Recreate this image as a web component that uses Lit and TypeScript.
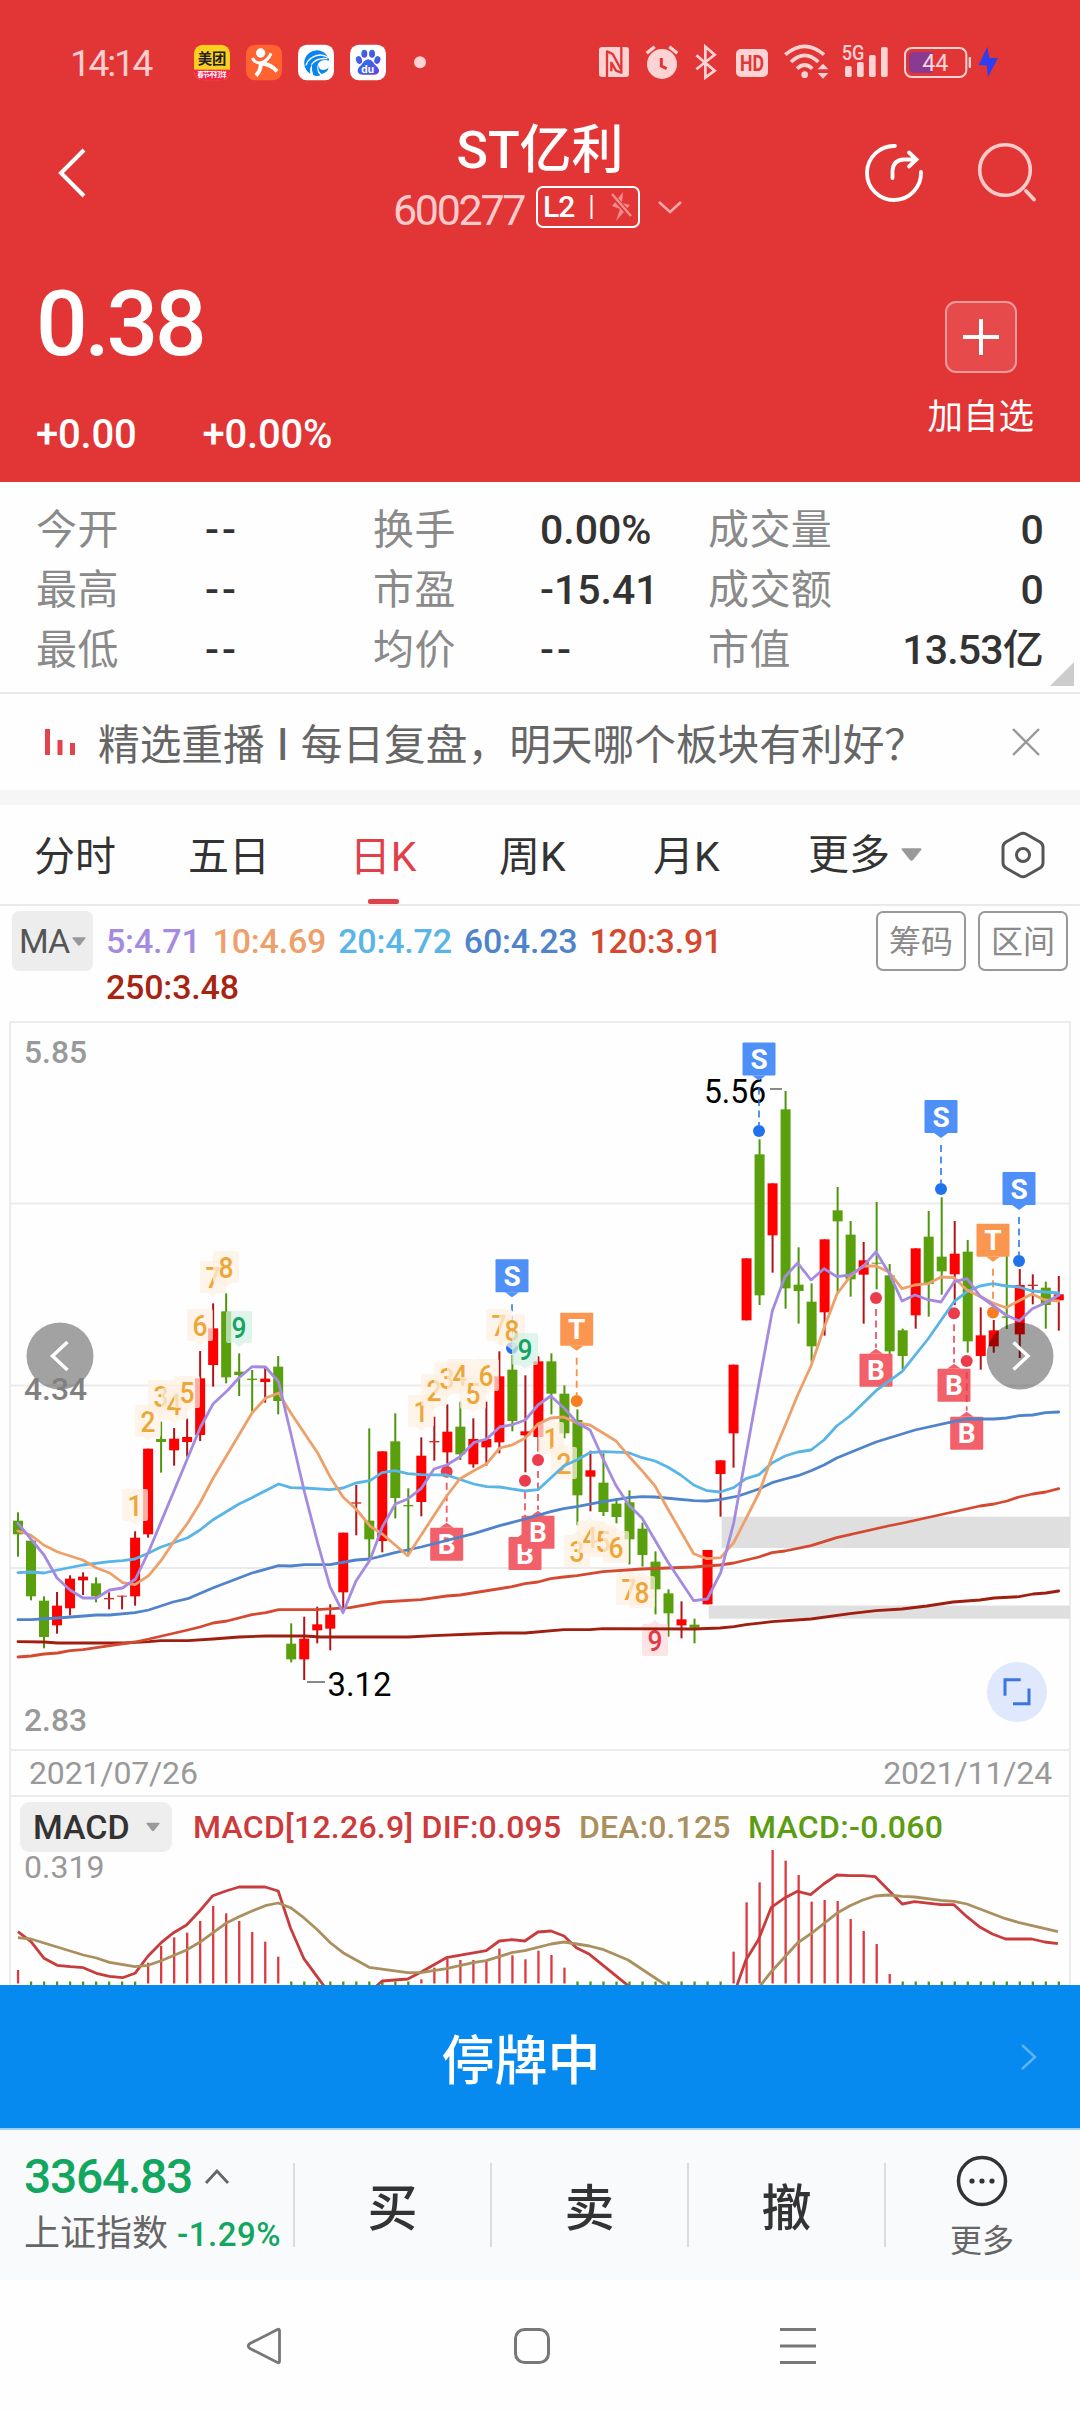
import { LitElement, html, svg, css } from "lit";
import { customElement } from "lit/decorators.js";

const FONT = css`Roboto, "Noto Sans CJK SC", sans-serif`;

/* ---------- candle data: [base y, rows of body top, body bottom, wick top, wick bottom] in thirds of a pixel ---------- */
type Row = [string, number, number, number, number];
const FIRST_X = 18;
const STEP = 13.01;
const xAt = (i: number) => FIRST_X + STEP * i;

const GROUPS: [number, Row[]][] = [
  [1390, [
    ["g", 392, 433, 367, 500], ["g", 452, 619, 452, 631], ["g", 632, 741, 619, 775], ["r", 647, 706, 606, 731],
    ["r", 566, 655, 556, 676], ["r", 560, 571, 547, 615], ["g", 580, 619, 562, 637], ["r", 624, 628, 607, 658],
    ["r", 617, 620, 617, 658], ["r", 443, 619, 424, 647], ["r", 176, 433, 176, 443], ["g", 147, 156, 95, 248],
    ["r", 146, 181, 114, 227], ["r", 141, 156, 86, 200], ["r", -35, 135, -117, 153],
  ]],
  [1000, [
    ["r", 985, 1095, 910, 1160], ["g", 934, 1132, 880, 1150], ["g", 1115, 1125, 1060, 1188],
    ["g", 1136, 1140, 1110, 1235], ["r", 1136, 1146, 1100, 1208], ["g", 1100, 1203, 1068, 1243],
  ]],
  [1390, [
    ["g", 761, 808, 700, 817], ["r", 746, 808, 680, 870], ["r", 703, 721, 650, 760], ["r", 674, 716, 643, 781],
    ["r", 428, 607, 428, 660],
  ]],
  [1240, [
    ["r", 787, 791, 735, 886], ["g", 842, 898, 565, 955], ["r", 634, 903, 634, 937], ["g", 604, 774, 520, 835],
    ["g", 795, 799, 745, 940], ["r", 647, 786, 592, 829], ["r", 603, 607, 530, 662], ["r", 575, 637, 493, 690],
    ["g", 560, 643, 485, 660], ["r", 597, 673, 535, 683], ["r", 597, 622, 485, 677], ["r", 409, 607, 334, 640],
    ["g", 389, 543, 345, 574], ["r", 574, 586, 406, 697], ["r", 364, 591, 349, 635], ["g", 364, 461, 340, 523],
    ["g", 461, 580, 436, 595], ["g", 540, 766, 508, 856], ["r", 691, 710, 632, 814], ["g", 728, 816, 640, 828],
    ["g", 791, 831, 775, 850], ["g", 787, 898, 751, 973], ["g", 866, 945, 848, 980], ["g", 965, 1048, 934, 1123],
    ["g", 1060, 1120, 1048, 1190], ["r", 1138, 1156, 1084, 1195], ["g", 1154, 1163, 1136, 1210],
    ["r", 930, 1093, 930, 1093],
  ]],
  [1400, [["r", 181, 222, 181, 350]]],
  [1010, [
    ["r", 1064, 1270, 1064, 1373], ["r", 745, 931, 745, 931], ["g", 433, 856, 388, 885], ["r", 520, 676, 520, 788],
    ["g", 298, 835, 243, 896], ["g", 824, 843, 712, 941], ["g", 875, 1009, 820, 1055], ["r", 688, 907, 688, 977],
    ["g", 601, 634, 531, 850], ["g", 674, 808, 633, 860], ["r", 751, 794, 696, 941], ["g", 758, 761, 576, 838],
    ["g", 796, 1024, 762, 1055], ["g", 961, 1038, 956, 1078], ["r", 715, 916, 715, 956], ["g", 680, 822, 603, 920],
    ["g", 740, 784, 562, 854], ["r", 731, 793, 633, 885], ["g", 725, 994, 690, 1028], ["r", 976, 1038, 892, 1079],
    ["r", 961, 1009, 930, 1028], ["g", 919, 923, 735, 957], ["r", 825, 973, 777, 1044], ["r", 824, 828, 793, 883],
    ["g", 833, 885, 815, 956], ["r", 853, 871, 798, 962],
  ]],
];
const CANDLES = GROUPS.flatMap(([base, rows]) =>
  rows.map(([c, ...v]) => ({ up: c === "r", v: v.map((n) => base + n / 3) })));

const LINES: { color: string; pts: string }[] = [
  { color: "#a01e10", pts: "18,1641.7 44,1642 57.7,1643 123,1643 149,1641.7 161,1640.7 188,1640.7 213,1639 239,1637 266,1636 305,1636 320,1637 408,1637 434,1635.7 474,1634 500,1633 525,1633 564,1629.7 590,1629.7 603,1628.7 694,1629 720,1628 734,1626.7 746,1624.7 772,1621.7 811,1619 850,1613.7 876,1610.7 902,1609 927,1606 953,1602 980,1600 994,1598 1019,1596.7 1033,1594 1046,1593 1058.7,1591" },
  { color: "#d4492f", pts: "18,1657 31,1656 44,1654 57.7,1653 70,1650.7 83,1649.7 110,1645.7 135,1642 149,1639 187.7,1630 200,1627 213,1623 227,1621 252,1614.7 266,1612.7 278.7,1609.7 317,1609.7 350,1607.7 382,1602 421,1599.7 446.7,1596 460,1595 512,1586.7 525,1583.7 538,1582 550.7,1578.7 563.7,1577 577,1575.7 603,1571.7 642,1569 693.7,1567 720,1565 733.7,1563 759,1557 772,1552.7 785,1551 811,1545.7 836.7,1537.7 888,1526 903,1523 980,1506 994,1504 1007,1501 1019,1497 1032.7,1494 1045.7,1492 1058.7,1488.7" },
  { color: "#4f83cc", pts: "18,1619.7 31,1619.7 57.7,1618 96.7,1615 109.7,1615 135,1612.7 148.7,1610 173,1602 187.7,1598.7 212.7,1588 252,1573 278.7,1565.7 290.7,1566 304.7,1564.7 330,1564.7 356,1560 370,1559 395,1552.7 421,1547 473.7,1533.7 499.7,1525.7 525,1519 550.7,1511.7 563.7,1508.7 576.7,1506.7 603,1501.7 628.7,1497.7 642,1496.7 655,1497 693.7,1500.7 707,1501 720,1499.7 738.3,1496 759,1489 772,1482.7 785,1479 798,1475.7 811,1470.7 824,1465 836.7,1458 876,1442 915,1430 953,1421.7 966.7,1419 994,1419 1006.7,1418 1019,1415.7 1032.7,1415 1045.7,1412.7 1058.7,1412" },
  { color: "#58b5e6", pts: "18,1572.7 31,1572 44,1573 57.7,1570 82.7,1565 109.7,1561.7 122.7,1560.7 135,1559 148.7,1553 161,1547 173,1543 187.7,1537.7 200,1530 212.7,1520 239,1504 252,1497.7 278.7,1484 290.7,1487.7 304.7,1488 330,1489.7 343,1488 356,1483 370,1480.7 382,1472.7 395,1470.7 407.7,1473.7 421,1474.7 446.7,1475 473.7,1484 486.7,1486.7 499.7,1487 525,1491 538,1489.7 563.7,1466 576.7,1460 590,1452.7 603,1451.7 628.7,1452.7 642,1457.7 655,1461 667.7,1467 680.7,1475 693.7,1485 707,1490.7 720,1492 733.7,1487.7 746,1478.7 759,1474.7 772,1463 785,1456 798,1452 811,1450 824,1440 836.7,1426 850,1416 876,1390.7 902,1371.7 928,1339 954,1301.7 967,1291.7 980,1286 993,1283.7 1006,1286 1019,1287 1032,1291 1045,1292 1059,1293" },
  { color: "#eda06a", pts: "18,1531 30.7,1535 43.7,1545 57.7,1552 82.7,1560 96.7,1568 109.7,1573 122.7,1582.7 135,1584.7 148.7,1575.7 161,1560.7 173,1542.7 187.7,1523 200,1503 212.7,1479 252,1413 265.7,1398 278.7,1393 290.7,1412.7 317.7,1453 330,1476.7 343,1497 356,1509 370,1526 382.3,1534 407.7,1555.7 446.7,1496 459.7,1479 473.7,1470.7 486.7,1463.7 499.7,1448 512,1445 525.3,1438 538,1424 550.7,1418 563.7,1417 577,1423 590,1425 615.7,1440.7 628.7,1456 642,1470.7 655,1486 667.7,1508.7 693.7,1553.7 707,1558.7 720.7,1557.7 733.7,1542.7 759,1493 772,1456.7 785,1426 797.7,1395 811,1366 824,1328 837,1294 850,1276.7 863,1266 876,1266 889,1272 902,1288.7 915,1285 928,1283.7 941,1277 954,1277.7 967,1290 993,1303 1006,1307.7 1019,1300.7 1032,1294 1045,1300 1059,1301" },
  { color: "#a48be0", pts: "18,1523.3 44,1555 57,1578 70,1590 83,1598 96.5,1598 109.5,1590 122.5,1588 135.5,1579 148.5,1552 187.7,1458 200.5,1427 213,1404 228,1390 239,1377.7 252,1366.7 265.5,1367 278.5,1381.7 290.7,1433 304.7,1493 317.7,1543 330,1586.7 343,1612.7 356,1581 370,1560 382.3,1527 395.3,1504 407.7,1499 421,1488.7 434,1469 446.7,1465 459.7,1457 473.7,1442.7 486.7,1439 499.7,1427 512.3,1424.7 525.3,1420 538,1405 550.7,1396 563.7,1407.7 577.3,1423 590,1430 602.7,1458 615.7,1485 628.7,1505 642,1518 667.7,1561.7 693.7,1600.7 707.3,1599 720.7,1572.7 733.7,1523 759,1383 772.3,1311 785,1276.7 797.7,1263 811,1280 824,1268.7 837,1276.7 850,1275 863,1266.7 876,1251.7 889,1273 902,1301 915,1295 928,1299.7 941,1302 954.3,1281.7 967,1278.7 980,1296 1006,1315 1019.3,1321 1032.3,1308.7 1045.3,1303 1059,1295" },
];

/* label, centre x, top y, tone (o: orange, g: green, p: pink), pointer below */
const TAGS: [string, number, number, string, boolean][] = [
  ["1", 135, 1489, "o", true], ["2", 148, 1405, "o", true], ["3", 161, 1380, "o", true], ["4", 174, 1388, "o", true],
  ["5", 187, 1376, "o", true], ["6", 200, 1309, "o", true], ["7", 213, 1261, "o", true], ["8", 226, 1251, "o", true],
  ["9", 239, 1311, "g", true],
  ["1", 421, 1395, "o", true], ["2", 434, 1374, "o", true], ["3", 447, 1362, "o", true], ["4", 460, 1359, "o", true],
  ["5", 473, 1377, "o", true], ["6", 486, 1359, "o", true], ["7", 499, 1309, "o", true], ["8", 512, 1314, "o", true],
  ["9", 525, 1333, "g", true],
  ["1", 551, 1422, "o", false], ["2", 564, 1447, "o", false], ["3", 577, 1535, "o", false], ["4", 590, 1521, "o", false],
  ["5", 603, 1525, "o", false], ["6", 616, 1531, "o", false], ["7", 629, 1573, "o", false], ["8", 642, 1576, "o", false],
  ["9", 655, 1624, "p", false],
];
const TONES: Record<string, [string, string]> = {
  o: ["#fdf0e0", "#eda638"], g: ["#d3f0e2", "#14a463"], p: ["#ffdadd", "#e03a48"],
};

/* letter, centre x, badge top, dot y */
const FLAGS: [string, number, number, number][] = [
  ["S", 512, 1259.3, 1348], ["T", 576.7, 1312.7, 1401], ["B", 446.7, 1527.7, 1471.7], ["B", 525, 1537, 1480.7],
  ["B", 538, 1515.7, 1460], ["S", 759, 1042.5, 1131], ["S", 941, 1100, 1189], ["T", 993, 1223.7, 1312.5],
  ["S", 1019, 1172, 1261], ["B", 876, 1353.7, 1298], ["B", 954, 1368.7, 1313.3], ["B", 966.7, 1416.7, 1361],
];
const FLAG_COLORS: Record<string, [string, string]> = {
  S: ["#4e8ff8", "#2272ee"], T: ["#fb9650", "#fb7d21"], B: ["#f2606a", "#ec3b4b"],
};

@customElement("k-chart")
class KChart extends LitElement {
  static styles = css`
    :host { display: block; height: 730px; }
    svg { display: block; font-family: ${FONT}; }
    .axis { fill: #999; font-size: 32px; font-weight: 500; }
    .axis.dim { fill: #808080; }
    .note { fill: #000; font-size: 33px; }
    .flag { fill: #fff; font-size: 28px; font-weight: 700; text-anchor: middle; }
    .tag { font-size: 30px; font-weight: 500; text-anchor: middle; }
  `;

  private candle(c: { up: boolean; v: number[] }, i: number) {
    const [t, b, wt, wb] = c.v;
    const x = xAt(i);
    const thin = b - t < 2;
    return svg`
      <rect x=${x - 1} y=${wt} width="2" height=${wb - wt} fill=${c.up ? "#b01518" : "#4d960c"}></rect>
      <rect x=${x - 5} y=${t} width="10" height=${b - t} fill=${c.up ? (thin ? "#d02a2a" : "#fe0000") : "#59a00c"}></rect>`;
  }

  private tag([label, x, y, tone, below]: [string, number, number, string, boolean]) {
    const [bg, fg] = TONES[tone];
    const tip = below ? `M${x - 5} ${y + 32}h10l-5 4z` : `M${x - 5} ${y}h10l-5 -4z`;
    return svg`
      <rect x=${x - 13} y=${y} width="26" height="32" rx="2" fill=${bg} opacity=".72"></rect>
      <path d=${tip} fill=${bg} opacity=".72"></path>
      <text class="tag" x=${x} y=${y + 27} fill=${fg} textLength="15" lengthAdjust="spacingAndGlyphs">${label}</text>`;
  }

  private flag([letter, x, y, dot]: [string, number, number, number]) {
    const [bg, fg] = FLAG_COLORS[letter];
    const down = letter !== "B";
    const tip = down ? `M${x - 7} ${y + 33}h14l-7 5z` : `M${x - 7} ${y}h14l-7 -5z`;
    const from = down ? y + 45 : dot + 11;
    const to = down ? dot - 6 : y - 6;
    return svg`
      <line x1=${x} x2=${x} y1=${from} y2=${to} stroke=${fg} stroke-width="1.8" stroke-dasharray="7 4.5" opacity=".85"></line>
      <circle cx=${x} cy=${dot} r="6" fill=${fg}></circle>
      <rect x=${x - 16.5} y=${y} width="33" height="33" rx="1" fill=${bg}></rect>
      <path d=${tip} fill=${bg}></path>
      <text class="flag" x=${x} y=${y + 26.5}>${letter}</text>`;
  }

  render() {
    return html`<svg width="1080" height="730" viewBox="0 1021 1080 730">
      <g stroke="#ebebeb" stroke-width="2" fill="none">
        <path d="M10 1022H1070V1751M10 1022V1751M10 1203.5H1070M10 1385.5H1070M10 1568H1070M10 1750H1070"></path>
      </g>
      <rect x="721.7" y="1516.7" width="348.3" height="31.3" fill="#dfdfdf"></rect>
      <rect x="708.7" y="1605.5" width="361.3" height="13.2" fill="#dfdfdf"></rect>
      ${CANDLES.map((c, i) => this.candle(c, i))}
      <text class="note" x="704" y="1103" textLength="62" lengthAdjust="spacingAndGlyphs">5.56</text>
      <text class="note" x="327.500" y="1696" textLength="64" lengthAdjust="spacingAndGlyphs">3.12</text>
      <path d="M770 1089H782M307 1682H325" stroke="#888" stroke-width="2"></path>
      ${FLAGS.map((f) => this.flag(f))}
      ${TAGS.map((t) => this.tag(t))}
      ${LINES.map((l) => svg`<polyline points=${l.pts} fill="none" stroke=${l.color} stroke-width="2.8" stroke-linejoin="round" stroke-linecap="round"></polyline>`)}
      <circle cx="60" cy="1356" r="33.5" fill="#000" opacity=".36"></circle>
      <circle cx="1020" cy="1356" r="33.5" fill="#000" opacity=".36"></circle>
      <path d="M67.5 1342L52.5 1356L67.5 1370M1013.5 1342.5L1028 1356L1013.5 1369.5" fill="none" stroke="#fff" stroke-width="3.4"></path>
      <text class="axis" x="24" y="1063" textLength="63" lengthAdjust="spacingAndGlyphs">5.85</text>
      <text class="axis dim" x="24" y="1400" textLength="63" lengthAdjust="spacingAndGlyphs">4.34</text>
      <text class="axis" x="24" y="1731" textLength="63" lengthAdjust="spacingAndGlyphs">2.83</text>
      <circle cx="1017" cy="1692" r="30" fill="#dfe8fd"></circle>
      <path d="M1020.7 1679.7H1005V1695.7M1029 1688.5V1703.7H1013" fill="none" stroke="#3b76e0" stroke-width="3"></path>
    </svg>`;
  }
}

/* ---------- MACD ---------- */
const HIST: Record<number, number> = { 0: 690 };
[668, 618, 592, 578, 543, 498, 520, 543, 576, 605, 650].forEach((v, i) => (HIST[10 + i] = v));
[718, 683, 657, 660, 660, 662, 626, 646, 658, 632, 645, 683].forEach((v, i) => (HIST[31 + i] = v));
[635, 487, 427, 330, 362, 405, 485, 480, 483, 537, 573, 612, 702].forEach((v, i) => (HIST[55 + i] = v));

const DIF = [
  "26,575 45,605 64,655 83,676 102,680 121,683 140,700 159,709 178,713 196,700 215,648 234,608 252,578 271,555 290,513 309,467 328,453 347,441 385,441 404,453 422,565 441,655 470,737",
  "547,737 555,723 592,717 611,697 648,653 706,632 725,603 743,599 762,603 781,576 800,573 819,588 837,623 856,643 912,737",
  "1070,737 1083,660 1101,600 1120,502 1140,473 1158,454 1177,464 1196,432 1215,405 1234,407 1253,407 1271,410 1310,492 1328,485 1366,494 1385,494 1404,530 1422,560 1441,582 1460,597 1498,597 1517,606 1536,611",
];
const DEA = [
  "26,593 45,597 83,621 121,645 140,654 159,667 196,680 215,676 234,662 271,630 290,607 328,550 347,530 366,513 385,497 404,489 422,503 441,533 460,568 480,609 498,638 536,682 592,698 611,698 648,686 687,668 706,662 743,638 762,632 800,612 819,606 856,618 875,628 912,660 968,737",
  "1104,737 1120,695 1158,609 1180,577 1215,520 1234,497 1253,480 1271,468 1290,465 1310,469 1328,471 1366,481 1385,484 1404,492 1441,521 1460,536 1480,548 1536,575",
];
const scaled = (s: string) =>
  s.split(" ").map((p) => {
    const [x, y] = p.split(",").map(Number);
    return `${(x / 1.452).toFixed(1)},${(y / 3 - 57).toFixed(1)}`;
  }).join(" ");

@customElement("macd-chart")
class MacdChart extends LitElement {
  static styles = css`
    :host { display: block; }
    svg { display: block; }
  `;
  render() {
    return html`<svg width="1080" height="188" viewBox="0 0 1080 188">
      <path d="M10 0V188M1070 0V188" stroke="#ebebeb" stroke-width="2"></path>
      ${Array.from({ length: 81 }, (_, i) => {
        const top = HIST[i];
        return top
          ? svg`<rect x=${xAt(i) - 1.1} y=${top / 3 - 57} width="2.3" height=${186.5 - (top / 3 - 57)} fill="#dc3a40"></rect>`
          : svg`<rect x=${xAt(i) - 1.1} y="184.5" width="2.3" height="3.5" fill="#4a9a10"></rect>`;
      })}
      ${DIF.map((p) => svg`<polyline points=${scaled(p)} fill="none" stroke="#c83c3e" stroke-width="2.8" stroke-linejoin="round"></polyline>`)}
      ${DEA.map((p) => svg`<polyline points=${scaled(p)} fill="none" stroke="#ab905f" stroke-width="2.8" stroke-linejoin="round"></polyline>`)}
    </svg>`;
  }
}

/* ---------- page ---------- */
const STATS = [
  ["今开", "--", "换手", "0.00%", "成交量", "0"],
  ["最高", "--", "市盈", "-15.41", "成交额", "0"],
  ["最低", "--", "均价", "--", "市值", "13.53亿"],
];
const MAS: [string, string][] = [
  ["5:4.71", "#a48be0"], ["10:4.69", "#eda06a"], ["20:4.72", "#58b5e6"], ["60:4.23", "#4f83cc"],
  ["120:3.91", "#d4492f"], ["250:3.48", "#a82412"],
];

@customElement("app-root")
class AppRoot extends LitElement {
  static styles = css`
    :host {
      display: flex; flex-direction: column; width: 1080px; height: 2412px; overflow: hidden;
      background: #fefefe; font-family: ${FONT}; color: #333;
    }
    * { box-sizing: border-box; }
    svg { display: block; flex: none; }
    .head { height: 482px; background: #e23536; color: #fff; flex: none; }
    .status { display: flex; align-items: center; height: 66px; margin-top: 30px; padding-left: 70px; }
    .time { width: 110px; font-size: 37px; letter-spacing: -2.2px; color: #ffcdcd; }
    .status-right { margin-left: auto; margin-right: 70px; }
    .mini { font-weight: 700; }
    .title-row { display: flex; height: 144px; padding: 24px 0 0; }
    .back { width: 300px; padding: 28px 0 0 56px; }
    .center { width: 480px; display: flex; flex-direction: column; align-items: center; }
    .name { font-size: 52px; line-height: 58px; font-weight: 500; padding-top: 2px; }
    .code-row { display: flex; align-items: center; height: 42px; margin-top: 6px; width: 294px; }
    .code { font-size: 43px; line-height: 42px; letter-spacing: -2.3px; color: #ffcaca; width: 143px; padding-top: 5px; }
    .caret { margin-left: 16px; }
    .l2 {
      display: flex; align-items: center; width: 104px; height: 42px; border: 2px solid #fff; border-radius: 7px;
      font-size: 30px; font-weight: 500; padding-left: 5px; letter-spacing: -1px; line-height: 38px;
    }
    .price-row { display: flex; justify-content: space-between; padding: 38px 46px 0 36px; }
    .price { font-size: 91px; line-height: 92px; font-weight: 500; letter-spacing: -3.2px; }
    .changes { display: flex; gap: 66px; font-size: 40px; line-height: 48px; font-weight: 500; margin-top: 41px; letter-spacing: -.2px; }
    .add { display: flex; flex-direction: column; align-items: center; padding-top: 23px; }
    .plus {
      display: grid; place-items: center; width: 72px; height: 72px; border: 2px solid #f09a9b; border-radius: 11px;
      background: #e64a4b;
    }
    .add-label { font-size: 35.5px; line-height: 40px; margin-top: 24px; }
    .stats { position: relative; flex: none; height: 212px; padding: 20px 37px 0 36px; border-bottom: 2px solid #e9e9e9; }
    .stat { display: grid; grid-template-columns: 169px 168px 167px 168px 146px 1fr; height: 60px; font-size: 41px; line-height: 56px; }
    .stat .label { color: #8a8a8a; letter-spacing: .4px; }
    .stat .value { color: #333; font-weight: 500; white-space: nowrap; }
    .stat .value.none { letter-spacing: 3px; }
    .stat .value:last-child { text-align: right; letter-spacing: -.8px; }
    .corner { position: absolute; right: 6px; bottom: 6px; }
    .notice { display: flex; align-items: center; flex: none; height: 96px; padding: 0 40px 0 45px; font-size: 41.7px; color: #666; }
    .notice p { display: flex; align-items: center; margin: 0 0 0 21px; flex: 1; white-space: nowrap; }
    .notice .sep { width: 36px; font-size: 34px; font-weight: 700; display: flex; justify-content: center; }
    .band { flex: none; height: 15px; background: #f6f6f6; }
    .tabs {
      display: grid; flex: none; height: 101px; padding-left: 34px; border-bottom: 2px solid #e9e9e9;
      grid-template-columns: 154px 162px 149px 154px 155px 192px 1fr; font-size: 41px; line-height: 104px; color: #333;
    }
    .tabs > * { height: 99px; }
    .tabs .more { display: flex; align-items: center; gap: 11px; }
    .tabs .gear { display: flex; align-items: center; padding: 0 0 0 1px; }
    .tabs .on { color: #e0404a; display: flex; flex-direction: column; width: 66px; align-items: center; white-space: nowrap; }
    .tabs .on b { font-weight: 400; height: 94px; }
    .tabs .on i { width: 31px; height: 5px; border-radius: 2px; background: #e0404a; }
    .ma { display: flex; flex: none; height: 115px; padding: 5px 12px 0 12px; }
    .ma-btn {
      display: flex; align-items: center; gap: 3px; justify-content: center; width: 81px; height: 60px; border-radius: 7px;
      background: #ededed; color: #555; font-size: 34px; letter-spacing: -1px;
    }
    .legend { display: flex; flex-wrap: wrap; align-content: flex-start; column-gap: 12px; width: 720px; margin-left: 13px; padding-top: 7px; font-size: 34px; line-height: 46px; font-weight: 500; letter-spacing: -.2px; }
    .boxes { display: flex; gap: 12px; margin-left: auto; }
    .box { width: 90px; height: 60px; border: 2px solid #999; border-radius: 7px; color: #8a8a8a; font-size: 32px; line-height: 58px; text-align: center; }
    .dates {
      display: flex; justify-content: space-between; flex: none; height: 46px; margin: 0 9px; padding: 0 17px 0 18px;
      border: solid #ebebeb; border-width: 0 2px 2px; color: #999; font-size: 32px; line-height: 45px; letter-spacing: -.15px;
    }
    .macd { display: grid; flex: none; height: 188px; overflow: hidden; }
    .macd > * { grid-area: 1 / 1; }
    .macd-head { display: flex; align-items: center; height: 50px; margin: 5px 0 0 20px; font-size: 32px; font-weight: 500; white-space: pre; }
    .macd-btn { display: flex; align-items: center; justify-content: space-between; width: 152px; height: 50px; padding: 0 12px 0 13px; border-radius: 9px; background: #eee; font-size: 34px; }
    .macd-max { align-self: start; margin: 51px 0 0 24px; font-size: 32px; line-height: 38px; color: #999; letter-spacing: 0; }
    .dif { color: #cd3a3c; margin-left: 21px; width: 386px; letter-spacing: .25px; }
    .dea { color: #ab905f; width: 169px; letter-spacing: .15px; }
    .m3 { color: #5a9c12; letter-spacing: .3px; }
    .halt {
      display: grid; grid-template-columns: 1fr 60px; align-items: center; flex: none; height: 145px; background: #068aef;
      border-bottom: 2px solid #9fd0f5; color: #fff; font-size: 53px; font-weight: 500;
    }
    .halt span { text-align: center; padding-left: 22px; }
    .bar { display: flex; flex: none; height: 150px; background: #f9fafc; }
    .index { width: 293px; padding: 18px 0 0 24px; }
    .idx-top { display: flex; align-items: center; gap: 12px; color: #12a65f; font-size: 48px; line-height: 58px; font-weight: 500; letter-spacing: -1.3px; }
    .idx-sub { display: flex; align-items: baseline; gap: 9px; margin-top: 3px; font-size: 36px; line-height: 50px; color: #666; white-space: nowrap; }
    .idx-sub b { font-size: 33px; font-weight: 500; color: #12a65f; letter-spacing: .5px; }
    .act { width: 197px; height: 84px; margin-top: 33px; border-left: 2px solid #dcdcdf; font-size: 50px; font-weight: 500; line-height: 92px; text-align: center; }
    .act.more { display: flex; flex-direction: column; align-items: center; width: 194px; font-size: 32px; line-height: 40px; font-weight: 400; color: #666; }
    .act.more svg { margin: -8px 0 14px; }
    .nav { display: flex; flex: none; height: 132px; align-items: center; padding-left: 244px; }
    .nav svg:nth-child(2) { margin-left: 228px; }
    .nav svg:nth-child(3) { margin-left: 227px; }
  `;

  private apps() {
    return html`<svg width="260" height="66" viewBox="390 0 780 198">
      <defs>
        <clipPath id="mt"><rect x="432" y="44" width="108" height="107" rx="27"></rect></clipPath>
        <linearGradient id="bd" x1="0" y1="0" x2="1" y2="1"><stop offset="0" stop-color="#1f7de8"></stop><stop offset="1" stop-color="#6a3fe0"></stop></linearGradient>
      </defs>
      <g clip-path="url(#mt)">
        <rect x="432" y="44" width="108" height="107" fill="#fdd01f"></rect>
        <rect x="432" y="119" width="108" height="32" fill="#f5254a"></rect>
      </g>
      <text class="mini" x="486" y="102" font-size="43" fill="#222" text-anchor="middle">美团</text>
      <text class="mini" x="486" y="142" font-size="20" fill="#fff" text-anchor="middle" textLength="88">春节不打烊</text>
      <rect x="588" y="44" width="108" height="107" rx="27" fill="#ff6430"></rect>
      <circle cx="632" cy="69" r="14" fill="#fff"></circle>
      <path d="M607 84Q614 99 632 99Q654 93 663 70" fill="none" stroke="#fff" stroke-width="9"></path>
      <path d="M631 98Q636 116 618 137M632 100Q662 102 681 124" fill="none" stroke="#fff" stroke-width="12"></path>
      <rect x="744" y="44" width="108" height="107" rx="27" fill="#fff"></rect>
      <path d="M838 92A38 38 0 1 0 782 132Q776 118 786 104Q784 120 790 136Q802 140 812 136Q800 126 802 110Q806 84 838 92Z" fill="#0b84ee"></path>
      <path d="M836 112Q830 122 818 120Q806 118 806 104Q802 122 814 132Q834 128 836 112Z" fill="#0b84ee"></path>
      <path d="M838 84Q810 66 784 84Q772 92 768 106M832 86Q800 82 784 104" fill="none" stroke="#fff" stroke-width="4"></path>
      <rect x="900" y="44" width="108" height="107" rx="27" fill="#fff"></rect>
      <g fill="url(#bd)">
        <ellipse cx="927" cy="90" rx="9" ry="12" transform="rotate(-18 927 90)"></ellipse>
        <ellipse cx="943" cy="71" rx="9" ry="12"></ellipse><ellipse cx="966" cy="71" rx="9" ry="12"></ellipse>
        <ellipse cx="982" cy="90" rx="9" ry="12" transform="rotate(18 982 90)"></ellipse>
        <path d="M954 88C940 90 938 104 928 110C918 122 924 134 938 134H972C988 134 992 120 981 110C970 102 970 90 954 88Z"></path>
      </g>
      <text class="mini" x="953" y="129" font-size="34" fill="#fff" text-anchor="middle">du</text>
      <circle cx="1110" cy="97" r="18" fill="#ffd3d3"></circle>
    </svg>`;
  }

  private signals() {
    return html`<svg class="status-right" width="420" height="66" viewBox="0 0 1260 198">
      <g fill="#ffd3d3">
        <rect x="27" y="51" width="90" height="90" rx="9"></rect>
        <circle cx="216" cy="102" r="45"></circle>
        <rect x="438" y="57" width="96" height="84" rx="15"></rect>
        <circle cx="644" cy="134" r="10"></circle>
        <path d="M683 118h32l-16 -17zM683 129h32l-16 17z"></path>
        <rect x="765" y="108" width="20" height="33" rx="5"></rect><rect x="801" y="96" width="20" height="45" rx="5"></rect>
        <rect x="837" y="75" width="20" height="66" rx="5"></rect><rect x="873" y="51" width="20" height="90" rx="5"></rect>
        <rect x="1136" y="81" width="7" height="33" rx="3"></rect>
      </g>
      <path d="M51 141V64L68 72L94 120M94 51V128L78 122L64 98V124" fill="none" stroke="#e23536" stroke-width="7" stroke-linejoin="round"></path>
      <path d="M214 84V108L230 116" fill="none" stroke="#e23536" stroke-width="9"></path>
      <g fill="none" stroke="#ffd3d3">
        <path d="M170 70L194 50M238 50L262 70" stroke-width="10"></path>
        <path d="M319 76L374 122L346 143V50L374 74L319 118" stroke-width="8"></path>
        <path d="M586 74Q644 24 702 74" stroke-width="11"></path>
        <path d="M603 96Q644 56 685 96" stroke-width="11"></path>
        <path d="M621 116Q644 94 667 116" stroke-width="11"></path>
        <rect x="945" y="54" width="184" height="87" rx="20" stroke-width="6"></rect>
      </g>
      <text class="mini" x="486" y="122" font-size="64" fill="#e23536" text-anchor="middle" textLength="72" lengthAdjust="spacingAndGlyphs">HD</text>
      <text x="755" y="90" font-size="60" fill="#ffd3d3" font-weight="500" textLength="68" lengthAdjust="spacingAndGlyphs">5G</text>
      <path d="M972 66H1028V129H972Q957 129 957 114V81Q957 66 972 66Z" fill="#8a3a90"></path>
      <text x="1036" y="122" font-size="70" fill="#fcd5dc" text-anchor="middle">44</text>
      <path d="M1192 50L1166 106H1190L1194 142L1224 84H1198Z" fill="#2f3ff0"></path>
    </svg>`;
  }

  private tri(w: number, h: number) {
    return html`<svg width=${w} height=${h} viewBox="0 0 20 12"><path d="M1.5 0h17q1.5 0 .8 1.4l-7.8 9.8q-1.5 1.4-3 0l-7.8-9.8q-.8-1.400.8-1.400z" fill="#999"></path></svg>`;
  }

  render() {
    return html`
      <div class="head">
        <div class="status"><div class="time">14:14</div>${this.apps()}${this.signals()}</div>
        <div class="title-row">
          <div class="back">
            <svg width="30" height="50" viewBox="0 0 30 50"><path d="M28 2L5 25L28 48" fill="none" stroke="#fff" stroke-width="4"></path></svg>
          </div>
          <div class="center">
            <div class="name">ST亿利</div>
            <div class="code-row">
              <div class="code">600277</div>
              <div class="l2">L2
                <svg width="60" height="38" viewBox="0 0 60 38">
                  <path d="M17.5 7V31" stroke="#fff" stroke-width="2"></path>
                  <path d="M49 4L38 18L46 21L42 33L56 17L48 15Z" fill="#f58c8d"></path>
                  <path d="M37 6L57 28" stroke="#e23536" stroke-width="5"></path>
                  <path d="M38 6L57 28" stroke="#f58c8d" stroke-width="2.500"></path>
                </svg>
              </div>
              <svg class="caret" width="28" height="16" viewBox="0 0 28 16"><path d="M3 3L14 13L25 3" fill="none" stroke="#f9a9a9" stroke-width="2.500"></path></svg>
            </div>
          </div>
          <svg width="300" height="120" viewBox="780 120 300 120">
            <path d="M895 146A27 27 0 1 0 921 172" fill="none" stroke="#fff" stroke-width="3.800" stroke-linecap="round"></path>
            <path d="M892.5 178V171Q893 160 904 159.500H915M909 152.500L916.500 159.500L909 166.500" fill="none" stroke="#fff" stroke-width="3.800" stroke-linecap="round"></path>
            <circle cx="1005" cy="170" r="25.300" fill="none" stroke="#ffcaca" stroke-width="3.600"></circle>
            <path d="M1026 191L1034 199.500" stroke="#ffcaca" stroke-width="3.800" stroke-linecap="round"></path>
          </svg>
        </div>
        <div class="price-row">
          <div>
            <div class="price">0.38</div>
            <div class="changes"><span>+0.00</span><span>+0.00%</span></div>
          </div>
          <div class="add">
            <div class="plus"><svg width="36" height="36" viewBox="0 0 36 36"><path d="M0 18H36M18 0V36" stroke="#fff" stroke-width="4"></path></svg></div>
            <div class="add-label">加自选</div>
          </div>
        </div>
      </div>

      <div class="stats">
        ${STATS.map((r) => html`<div class="stat">${r.map((t, i) => html`<span class=${i % 2 ? (t === "--" ? "value none" : "value") : "label"}>${t}</span>`)}</div>`)}
        <svg class="corner" width="24" height="24"><path d="M24 0V24H0Z" fill="#ccc"></path></svg>
      </div>

      <div class="notice">
        <svg width="32" height="28" viewBox="0 0 32 28"><path d="M2.5 1V27M15 12V27M27.5 15V27" stroke="#e3434d" stroke-width="5"></path></svg>
        <p>精选重播<span class="sep">丨</span>每日复盘，明天哪个板块有利好？</p>
        <svg width="28" height="28" viewBox="0 0 28 28"><path d="M1 1L27 27M27 1L1 27" stroke="#999" stroke-width="2.400"></path></svg>
      </div>
      <div class="band"></div>

      <div class="tabs">
        <span>分时</span><span>五日</span><span class="on"><b>日K</b><i></i></span><span>周K</span><span>月K</span>
        <span class="more">更多 ${this.tri(21, 13)}</span>
        <span class="gear">
          <svg width="44" height="48" viewBox="0 0 44 48">
            <path d="M19 3Q22 1.5 25 3L39 11Q42 13 42 16V32Q42 35 39 37L25 45Q22 46.5 19 45L5 37Q2 35 2 32V16Q2 13 5 11Z" fill="none" stroke="#555" stroke-width="3"></path>
            <circle cx="22" cy="24" r="6.500" fill="none" stroke="#555" stroke-width="3"></circle>
          </svg>
        </span>
      </div>

      <div class="ma">
        <div class="ma-btn">MA${this.tri(14, 9)}</div>
        <div class="legend">${MAS.map(([t, c]) => html`<span style="color:${c}">${t}</span>`)}</div>
        <div class="boxes"><div class="box">筹码</div><div class="box">区间</div></div>
      </div>

      <k-chart></k-chart>
      <div class="dates"><span>2021/07/26</span><span>2021/11/24</span></div>
      <div class="macd">
        <macd-chart></macd-chart>
        <div class="macd-head">
          <div class="macd-btn">MACD${this.tri(14, 10)}</div>
          <span class="dif">MACD[12.26.9] DIF:0.095</span><span class="dea">DEA:0.125</span><span class="m3">MACD:-0.060</span>
        </div>
        <div class="macd-max">0.319</div>
      </div>

      <div class="halt">
        <span>停牌中</span>
        <svg width="18" height="28" viewBox="0 0 18 28"><path d="M2 2L15 14L2 26" fill="none" stroke="#5cb2f5" stroke-width="2.500"></path></svg>
      </div>

      <div class="bar">
        <div class="index">
          <div class="idx-top">3364.83
            <svg width="26" height="16" viewBox="0 0 26 16"><path d="M2 14L13 2L24 14" fill="none" stroke="#666" stroke-width="2.800"></path></svg>
          </div>
          <div class="idx-sub">上证指数<b>-1.29%</b></div>
        </div>
        <div class="act">买</div><div class="act">卖</div><div class="act">撤</div>
        <div class="act more">
          <svg width="52" height="52" viewBox="0 0 52 52">
            <circle cx="26" cy="26" r="23.500" fill="none" stroke="#333" stroke-width="3.500"></circle>
            <g fill="#333"><circle cx="16" cy="26" r="2.600"></circle><circle cx="26" cy="26" r="2.600"></circle><circle cx="36" cy="26" r="2.600"></circle></g>
          </svg>
          <span>更多</span>
        </div>
      </div>

      <div class="nav">
        <svg width="40" height="40" viewBox="0 0 40 40"><path d="M33.5 3.5Q35.5 2.5 35.5 5V35Q35.5 37.5 33.5 36.5L6 22.5Q2.5 20 6 17.5Z" fill="none" stroke="#777" stroke-width="2.800"></path></svg>
        <svg width="40" height="40" viewBox="0 0 40 40"><rect x="3.5" y="3.5" width="33" height="33" rx="9" fill="none" stroke="#777" stroke-width="3"></rect></svg>
        <svg width="40" height="40" viewBox="0 0 40 40"><path d="M1 3.5H37M1 20H37M1 36.5H37" stroke="#777" stroke-width="3"></path></svg>
      </div>`;
  }
}
